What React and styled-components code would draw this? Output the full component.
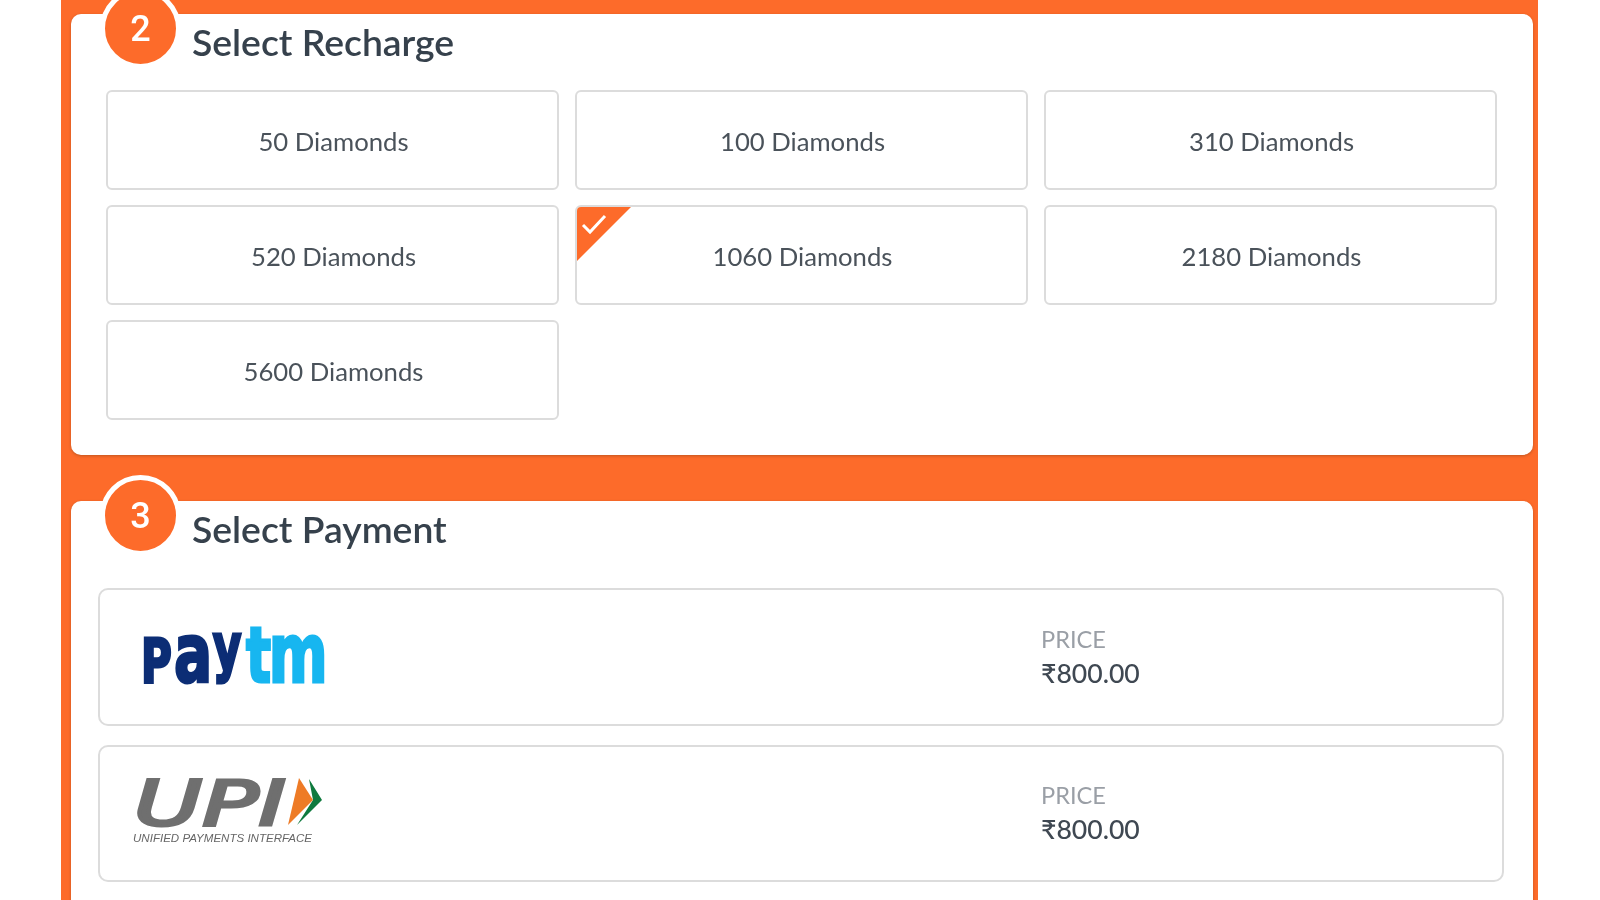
import React from "react";
import styled, { createGlobalStyle } from "styled-components";

const Global = createGlobalStyle`
  html, body { margin: 0; padding: 0; background: #fff; height: 900px; overflow: hidden; }
  body { font-family: Lato, "Liberation Sans", sans-serif; }
`;

const Page = styled.div`
  width: 1600px;
  height: 900px;
  overflow: hidden;
  padding: 0 62px 0 61px;
  box-sizing: border-box;
  filter: blur(0.5px);
`;

const Panel = styled.main`
  background: #fd6b2a;
  padding: 14px 5px 0 10px;
  display: flex;
  flex-direction: column;
  gap: 46px;
`;

const Card = styled.section`
  position: relative;
  background: #fff;
  border-radius: 10px;
  padding: 0 ${(p) => p.$right}px ${(p) => p.$bottom}px ${(p) => p.$left}px;
  box-shadow: 0 1px 3px rgba(120, 60, 20, 0.45);
`;

const StepBadge = styled.div`
  position: absolute;
  left: 29px;
  top: -26px;
  width: 71px;
  height: 71px;
  box-sizing: content-box;
  border: 5px solid #fff;
  border-radius: 50%;
  background: #fd6b2a;
  color: #fff;
  font: 500 36px/72px Roboto, sans-serif;
  text-align: center;
`;

const Header = styled.header`
  height: ${(p) => p.$height}px;
  box-sizing: border-box;
  padding: 5px 0 0 ${(p) => p.$indent}px;
`;

const Title = styled.h2`
  margin: 0;
  font: 600 37.3px/46px Lato, sans-serif;
  color: #36414c;
`;

const TileGrid = styled.div`
  display: grid;
  grid-template-columns: repeat(3, 453px);
  grid-auto-rows: 100px;
  column-gap: 16px;
  row-gap: 15px;
`;

const Tile = styled.button`
  position: relative;
  overflow: hidden;
  padding: 2px 0 0 2px;
  background: #fff;
  border: 2px solid #dcdcdc;
  border-radius: 6px;
  font: 400 25.7px/30px Lato, sans-serif;
  color: #4a525a;
  text-align: center;
`;

const Corner = styled.span`
  position: absolute;
  left: -2px;
  top: -2px;
  width: 58px;
  height: 58px;
  background: #fd6b2a;
  clip-path: polygon(0 0, 100% 0, 0 100%);
`;

const Tick = styled.svg`
  position: absolute;
  left: 6px;
  top: 8px;
  width: 26px;
  height: 22px;
`;

const PayList = styled.div`
  display: flex;
  flex-direction: column;
  gap: 19px;
`;

const PayRow = styled.div`
  display: grid;
  grid-template-columns: 941px 1fr;
  align-items: center;
  height: 137.5px;
  box-sizing: border-box;
  background: #fff;
  border: 2px solid #dcdcdc;
  border-radius: 10px;
`;

const LogoCell = styled.div`
  display: flex;
  align-items: center;
  padding-left: ${(p) => p.$left}px;
`;

const Logo = styled.svg`
  display: block;
  overflow: visible;
`;

const Price = styled.div`
  display: flex;
  flex-direction: column;
`;

const PriceLabel = styled.span`
  font: 400 23.6px/32px Lato, sans-serif;
  color: #9a9fa6;
`;

const PriceValue = styled.span`
  font: 500 26.6px/36px Lato, sans-serif;
  color: #3f4852;
`;

const navy = { fill: "#0c2d75", stroke: "#0c2d75", strokeWidth: 3 };
const sky = { fill: "#17b6f0", stroke: "#17b6f0", strokeWidth: 3 };

const PaytmLogo = () => (
  <Logo width="200" height="64" viewBox="0 0 200 64" role="img" aria-label="Paytm">
    <text transform="scale(0.69 1)" fontFamily="DejaVu Sans" fontWeight="700">
      <tspan x="0" y="57" fontSize="61" {...navy}>P</tspan>
      <tspan x="48" y="57" fontSize="82" {...navy}>a</tspan>
      <tspan x="104" y="44" fontSize="64" {...navy}>y</tspan>
      <tspan x="152" y="57" fontSize="76" {...sky}>t</tspan>
      <tspan x="185" y="57" fontSize="82" {...sky}>m</tspan>
    </text>
  </Logo>
);

const UpiLogo = () => (
  <Logo width="196" height="78" viewBox="0 0 196 78" role="img" aria-label="UPI Unified Payments Interface">
    <text x="1" y="51" fontFamily="DejaVu Sans" fontWeight="400" fontStyle="italic" fontSize="63" fill="#6f6f6f" stroke="#6f6f6f" strokeWidth="3" textLength="152" lengthAdjust="spacingAndGlyphs">UPI</text>
    <polygon points="176,5 189,26 164,51 180,26" fill="#0f7a3e" />
    <polygon points="166,4 180,26 155,51" fill="#ee7b26" />
    <text x="0" y="68" fontFamily="Liberation Sans" fontStyle="italic" fontWeight="400" fontSize="11.5" fill="#666" textLength="179" lengthAdjust="spacingAndGlyphs">UNIFIED PAYMENTS INTERFACE</text>
  </Logo>
);

const recharges = ["50", "100", "310", "520", "1060", "2180", "5600"];

const payments = [
  { id: "paytm", left: 41, logo: <PaytmLogo /> },
  { id: "upi", left: 33, logo: <UpiLogo /> },
];

export default function App() {
  return (
    <Page>
      <Global />
      <Panel>
        <Card $left={35} $right={37} $bottom={35}>
          <StepBadge>2</StepBadge>
          <Header $height={76} $indent={86}>
            <Title>Select Recharge</Title>
          </Header>
          <TileGrid>
            {recharges.map((n) => (
              <Tile key={n}>
                {n === "1060" && (
                  <Corner>
                    <Tick viewBox="0 0 26 22">
                      <path d="M2 12 L9 19 L24 3" fill="none" stroke="#fff" strokeWidth="3" />
                    </Tick>
                  </Corner>
                )}
                {n} Diamonds
              </Tile>
            ))}
          </TileGrid>
        </Card>
        <Card $left={27} $right={29} $bottom={40}>
          <StepBadge>3</StepBadge>
          <Header $height={87} $indent={94}>
            <Title>Select Payment</Title>
          </Header>
          <PayList>
            {payments.map((p) => (
              <PayRow key={p.id}>
                <LogoCell $left={p.left}>{p.logo}</LogoCell>
                <Price>
                  <PriceLabel>PRICE</PriceLabel>
                  <PriceValue>₹800.00</PriceValue>
                </Price>
              </PayRow>
            ))}
          </PayList>
        </Card>
      </Panel>
    </Page>
  );
}
